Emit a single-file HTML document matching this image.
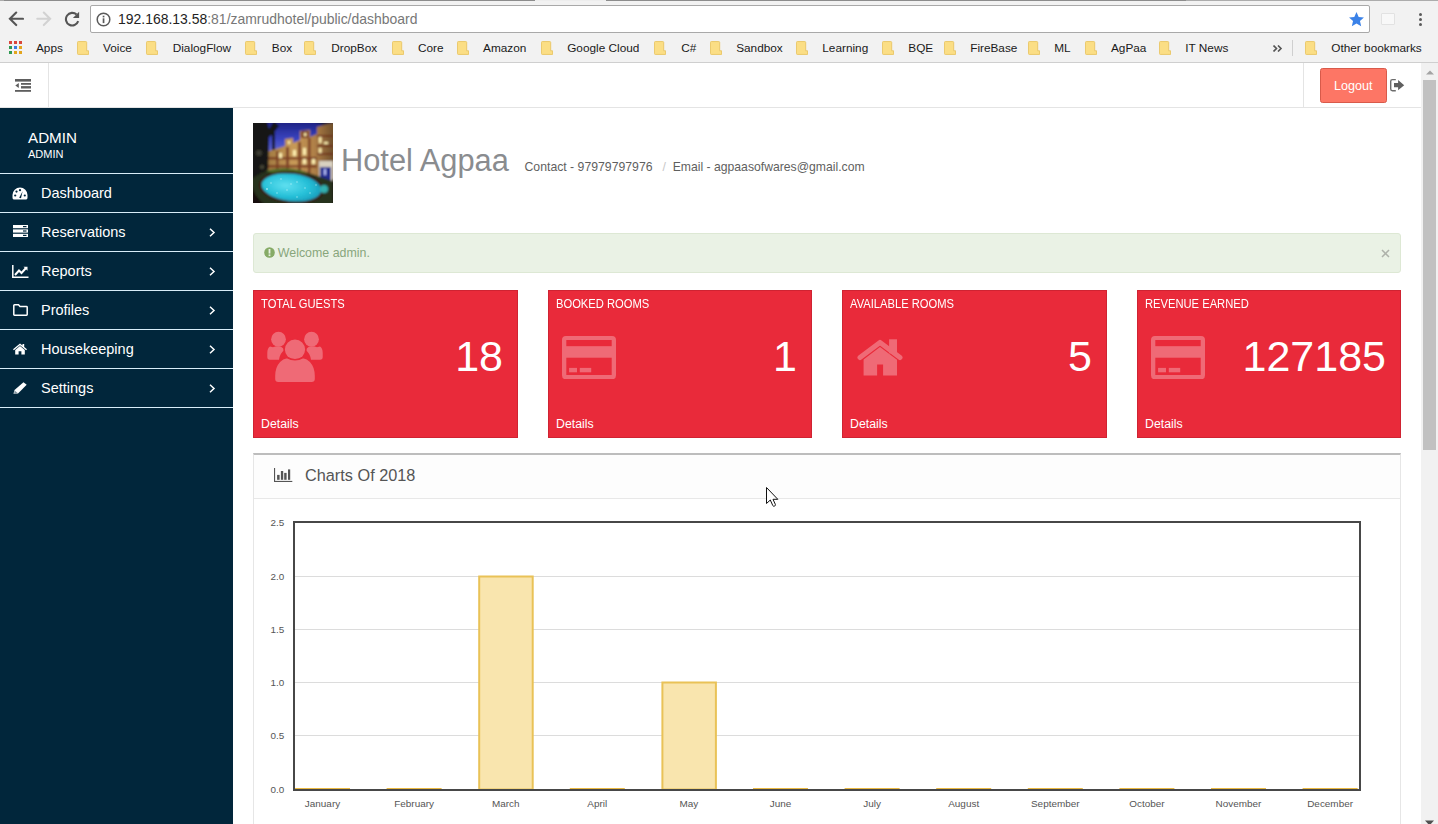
<!DOCTYPE html>
<html><head><meta charset="utf-8">
<style>
*{box-sizing:border-box;margin:0;padding:0}
html,body{width:1438px;height:824px;overflow:hidden;background:#fff;font-family:"Liberation Sans",sans-serif}
.abs{position:absolute}
.t{position:absolute;white-space:nowrap;line-height:1}
/* browser chrome */
#chrome{position:absolute;left:0;top:0;width:1438px;height:63px;background:#f2f2f2}
#topline{position:absolute;left:0;top:0;width:1438px;height:1px;background:#9a9a9a}
#addr{position:absolute;left:90px;top:5px;width:1280px;height:28px;background:#fff;border:1px solid #a9a9a9;border-radius:2px}
#bmline{position:absolute;left:0;top:62px;width:1438px;height:1px;background:#cfcfcf}
.bm{position:absolute;top:41px;font-size:11.8px;color:#1a1a1a;line-height:14px}
.fold{position:absolute;top:41px;width:12px;height:14px}
/* navbar */
#nav{position:absolute;left:0;top:63px;width:1421px;height:45px;background:#fff;border-bottom:1px solid #e4e4e4}
/* sidebar */
#side{position:absolute;left:0;top:108px;width:233px;height:716px;background:#01263b}
.sep{position:absolute;left:0;width:233px;height:1px;background:#d8edf9}
.mi{position:absolute;left:41px;font-size:14.5px;color:#fff;line-height:1}
.chev{position:absolute;left:209px;width:7px;height:9px}
.ico{position:absolute}
/* scrollbar */
#sb{position:absolute;left:1421px;top:63px;width:17px;height:761px;background:#f1f1f1}
#thumb{position:absolute;left:1423px;top:80px;width:13px;height:370px;background:#c1c1c1}
/* cards */
.card{position:absolute;top:290px;height:148px;background:#e92a3a;color:#fff;border:1px solid #cf2332}
.card .lbl{position:absolute;left:7px;top:7px;font-size:11.2px;line-height:1;white-space:nowrap;transform:scaleY(1.1);transform-origin:0 0}
.card .num{position:absolute;right:14px;top:338px;font-size:42px;line-height:1}
.card .det{position:absolute;left:7px;top:127px;font-size:12.3px;line-height:1}
</style></head><body>

<!-- ============ BROWSER CHROME ============ -->
<div id="chrome"></div>
<div class="abs" style="left:0;top:0;width:1438px;height:1px;background:#acacac"></div>
<div class="abs" style="left:4px;top:0;width:531px;height:1px;background:#8c8c8c"></div>
<div class="abs" style="left:535px;top:0;width:71px;height:1px;background:#ededed"></div>
<div class="abs" style="left:606px;top:0;width:580px;height:1px;background:#8c8c8c"></div>
<!-- nav icons -->
<svg class="abs" style="left:8px;top:11px" width="16" height="16" viewBox="0 0 16 16"><path d="M15 7.8H2.5M8.2 1.5L1.9 7.8 8.2 14.1" stroke="#555" stroke-width="2.1" fill="none" stroke-linecap="round"/></svg>
<svg class="abs" style="left:36px;top:11px" width="16" height="16" viewBox="0 0 16 16"><path d="M1.3 7.8H13.5M7.8 1.5L14.1 7.8 7.8 14.1" stroke="#d2d2d2" stroke-width="2.1" fill="none" stroke-linecap="round"/></svg>
<svg class="abs" style="left:64px;top:11px" width="16" height="16" viewBox="0 0 16 16"><path d="M14.2 10.2A6.3 6.3 0 1 1 12.6 3.6" stroke="#555" stroke-width="2.1" fill="none"/><path d="M15.1 0.8V7H8.9z" fill="#555"/></svg>
<div id="addr"></div>
<svg class="abs" style="left:96px;top:12px" width="15" height="15" viewBox="0 0 15 15"><circle cx="7.5" cy="7.5" r="6.3" stroke="#5a5a5a" stroke-width="1.5" fill="none"/><rect x="6.7" y="6.3" width="1.7" height="4.8" fill="#5a5a5a"/><rect x="6.7" y="3.7" width="1.7" height="1.7" fill="#5a5a5a"/></svg>
<div class="t" style="left:118px;top:12px;font-size:13.96px;line-height:14px;color:#222">192.168.13.58<span style="color:#777">:81/zamrudhotel/public/dashboard</span></div>
<svg class="abs" style="left:1347.5px;top:10.5px" width="17" height="17" viewBox="0 0 24 24"><path d="M12 1.5l3.1 7 7.4.6-5.6 4.9 1.7 7.4L12 17.5 5.4 21.4l1.7-7.4L1.5 9.1l7.4-.6z" fill="#3b82e8"/></svg>
<div class="abs" style="left:1381px;top:13px;width:14px;height:12px;border:1px solid #e2e2e2;background:#f8f8f8;border-radius:1px"></div>
<div class="abs" style="left:1419px;top:13px;width:3px;height:3px;border-radius:50%;background:#5a5a5a"></div>
<div class="abs" style="left:1419px;top:18px;width:3px;height:3px;border-radius:50%;background:#5a5a5a"></div>
<div class="abs" style="left:1419px;top:23px;width:3px;height:3px;border-radius:50%;background:#5a5a5a"></div>

<!-- bookmarks -->
<svg class="abs" style="left:9px;top:41px" width="14" height="14" viewBox="0 0 14 14">
<rect x="0" y="0" width="3" height="3" fill="#d9473a"/><rect x="5" y="0" width="3" height="3" fill="#d9473a"/><rect x="10" y="0" width="3" height="3" fill="#d9473a"/>
<rect x="0" y="5" width="3" height="3" fill="#2e9a52"/><rect x="5" y="5" width="3" height="3" fill="#3b7de0"/><rect x="10" y="5" width="3" height="3" fill="#e3a51e"/>
<rect x="0" y="10" width="3" height="3" fill="#2e9a52"/><rect x="5" y="10" width="3" height="3" fill="#e3a51e"/><rect x="10" y="10" width="3" height="3" fill="#e3a51e"/>
</svg>
<div class="bm" style="left:36px">Apps</div>
<svg class="fold" style="left:77px" width="13" height="15" viewBox="0 0 13 15"><path d="M0.5 1.5Q0.5 0.5 1.5 0.5H9.5Q10.5 0.5 10.5 1.5V10.5H12.5V14.5H1.5Q0.5 14.5 0.5 13.5z" fill="#fbde85" stroke="#e9c565" stroke-width="1"/></svg>
<div class="bm" style="left:103.0px">Voice</div>
<svg class="fold" style="left:146px" width="13" height="15" viewBox="0 0 13 15"><path d="M0.5 1.5Q0.5 0.5 1.5 0.5H9.5Q10.5 0.5 10.5 1.5V10.5H12.5V14.5H1.5Q0.5 14.5 0.5 13.5z" fill="#fbde85" stroke="#e9c565" stroke-width="1"/></svg>
<div class="bm" style="left:172.7px">DialogFlow</div>
<svg class="fold" style="left:245px" width="13" height="15" viewBox="0 0 13 15"><path d="M0.5 1.5Q0.5 0.5 1.5 0.5H9.5Q10.5 0.5 10.5 1.5V10.5H12.5V14.5H1.5Q0.5 14.5 0.5 13.5z" fill="#fbde85" stroke="#e9c565" stroke-width="1"/></svg>
<div class="bm" style="left:271.8px">Box</div>
<svg class="fold" style="left:304px" width="13" height="15" viewBox="0 0 13 15"><path d="M0.5 1.5Q0.5 0.5 1.5 0.5H9.5Q10.5 0.5 10.5 1.5V10.5H12.5V14.5H1.5Q0.5 14.5 0.5 13.5z" fill="#fbde85" stroke="#e9c565" stroke-width="1"/></svg>
<div class="bm" style="left:331.2px">DropBox</div>
<svg class="fold" style="left:392px" width="13" height="15" viewBox="0 0 13 15"><path d="M0.5 1.5Q0.5 0.5 1.5 0.5H9.5Q10.5 0.5 10.5 1.5V10.5H12.5V14.5H1.5Q0.5 14.5 0.5 13.5z" fill="#fbde85" stroke="#e9c565" stroke-width="1"/></svg>
<div class="bm" style="left:418.0px">Core</div>
<svg class="fold" style="left:457px" width="13" height="15" viewBox="0 0 13 15"><path d="M0.5 1.5Q0.5 0.5 1.5 0.5H9.5Q10.5 0.5 10.5 1.5V10.5H12.5V14.5H1.5Q0.5 14.5 0.5 13.5z" fill="#fbde85" stroke="#e9c565" stroke-width="1"/></svg>
<div class="bm" style="left:483.1px">Amazon</div>
<svg class="fold" style="left:541px" width="13" height="15" viewBox="0 0 13 15"><path d="M0.5 1.5Q0.5 0.5 1.5 0.5H9.5Q10.5 0.5 10.5 1.5V10.5H12.5V14.5H1.5Q0.5 14.5 0.5 13.5z" fill="#fbde85" stroke="#e9c565" stroke-width="1"/></svg>
<div class="bm" style="left:567.2px">Google Cloud</div>
<svg class="fold" style="left:654px" width="13" height="15" viewBox="0 0 13 15"><path d="M0.5 1.5Q0.5 0.5 1.5 0.5H9.5Q10.5 0.5 10.5 1.5V10.5H12.5V14.5H1.5Q0.5 14.5 0.5 13.5z" fill="#fbde85" stroke="#e9c565" stroke-width="1"/></svg>
<div class="bm" style="left:681.3px">C#</div>
<svg class="fold" style="left:710px" width="13" height="15" viewBox="0 0 13 15"><path d="M0.5 1.5Q0.5 0.5 1.5 0.5H9.5Q10.5 0.5 10.5 1.5V10.5H12.5V14.5H1.5Q0.5 14.5 0.5 13.5z" fill="#fbde85" stroke="#e9c565" stroke-width="1"/></svg>
<div class="bm" style="left:736.2px">Sandbox</div>
<svg class="fold" style="left:796px" width="13" height="15" viewBox="0 0 13 15"><path d="M0.5 1.5Q0.5 0.5 1.5 0.5H9.5Q10.5 0.5 10.5 1.5V10.5H12.5V14.5H1.5Q0.5 14.5 0.5 13.5z" fill="#fbde85" stroke="#e9c565" stroke-width="1"/></svg>
<div class="bm" style="left:822.3px">Learning</div>
<svg class="fold" style="left:882px" width="13" height="15" viewBox="0 0 13 15"><path d="M0.5 1.5Q0.5 0.5 1.5 0.5H9.5Q10.5 0.5 10.5 1.5V10.5H12.5V14.5H1.5Q0.5 14.5 0.5 13.5z" fill="#fbde85" stroke="#e9c565" stroke-width="1"/></svg>
<div class="bm" style="left:908.3px">BQE</div>
<svg class="fold" style="left:944px" width="13" height="15" viewBox="0 0 13 15"><path d="M0.5 1.5Q0.5 0.5 1.5 0.5H9.5Q10.5 0.5 10.5 1.5V10.5H12.5V14.5H1.5Q0.5 14.5 0.5 13.5z" fill="#fbde85" stroke="#e9c565" stroke-width="1"/></svg>
<div class="bm" style="left:970.2px">FireBase</div>
<svg class="fold" style="left:1028px" width="13" height="15" viewBox="0 0 13 15"><path d="M0.5 1.5Q0.5 0.5 1.5 0.5H9.5Q10.5 0.5 10.5 1.5V10.5H12.5V14.5H1.5Q0.5 14.5 0.5 13.5z" fill="#fbde85" stroke="#e9c565" stroke-width="1"/></svg>
<div class="bm" style="left:1054.3px">ML</div>
<svg class="fold" style="left:1085px" width="13" height="15" viewBox="0 0 13 15"><path d="M0.5 1.5Q0.5 0.5 1.5 0.5H9.5Q10.5 0.5 10.5 1.5V10.5H12.5V14.5H1.5Q0.5 14.5 0.5 13.5z" fill="#fbde85" stroke="#e9c565" stroke-width="1"/></svg>
<div class="bm" style="left:1111.0px">AgPaa</div>
<svg class="fold" style="left:1159px" width="13" height="15" viewBox="0 0 13 15"><path d="M0.5 1.5Q0.5 0.5 1.5 0.5H9.5Q10.5 0.5 10.5 1.5V10.5H12.5V14.5H1.5Q0.5 14.5 0.5 13.5z" fill="#fbde85" stroke="#e9c565" stroke-width="1"/></svg>
<div class="bm" style="left:1185.3px">IT News</div>
<svg class="abs" style="left:1273px;top:45px" width="10" height="7" viewBox="0 0 10 7"><path d="M0.5 0.5L3.5 3.5 0.5 6.5M5 0.5L8 3.5 5 6.5" stroke="#555" stroke-width="1.6" fill="none"/></svg>
<div class="abs" style="left:1292px;top:40px;width:1px;height:16px;background:#cfcfcf"></div>
<svg class="fold" style="left:1305px" width="13" height="15" viewBox="0 0 13 15"><path d="M0.5 1.5Q0.5 0.5 1.5 0.5H9.5Q10.5 0.5 10.5 1.5V10.5H12.5V14.5H1.5Q0.5 14.5 0.5 13.5z" fill="#fbde85" stroke="#e9c565" stroke-width="1"/></svg>
<div class="bm" style="left:1331.3px">Other bookmarks</div>
<div id="bmline"></div>

<!-- ============ NAVBAR ============ -->
<div id="nav"></div>
<div class="abs" style="left:48px;top:63px;width:1px;height:44px;background:#e4e4e4"></div>
<div class="abs" style="left:1303px;top:63px;width:1px;height:44px;background:#e4e4e4"></div>
<svg class="abs" style="left:15px;top:79px" width="16" height="13" viewBox="0 0 16 13" fill="#5e5e5e"><rect x="0" y="0" width="16" height="2.6"/><rect x="6" y="4" width="10" height="1.8"/><rect x="6" y="7.1" width="10" height="2.4"/><rect x="0" y="11" width="16" height="1.8"/><path d="M0.3 6.4L3.8 4V8.9z"/></svg>
<div class="abs" style="left:1320px;top:68px;width:67px;height:35px;background:#fd7665;border:1px solid #d85a4a;border-radius:2.5px"></div>
<div class="t" style="left:1334px;top:80px;font-size:12.6px;color:#fff">Logout</div>
<svg class="abs" style="left:1389px;top:78px" width="17" height="14" viewBox="0 0 17 14"><path d="M6.8 1.6H3.4Q1.7 1.6 1.7 3.3V11.1Q1.7 12.8 3.4 12.8H6.8" stroke="#6c6c6c" stroke-width="1.4" fill="none"/><path d="M5 5H9.1V2L15.2 7.2 9.1 12.3V9.3H5z" fill="#5f5f5f"/></svg>

<!-- ============ SIDEBAR ============ -->
<div id="side"></div>
<div class="t" style="left:28px;top:130px;font-size:15.2px;color:#fff">ADMIN</div>
<div class="t" style="left:28px;top:149px;font-size:11px;color:#fff">ADMIN</div>
<div class="sep" style="top:173px"></div>
<div class="sep" style="top:212px"></div>
<div class="sep" style="top:251px"></div>
<div class="sep" style="top:290px"></div>
<div class="sep" style="top:329px"></div>
<div class="sep" style="top:368px"></div>
<div class="sep" style="top:407px"></div>
<div class="mi" style="top:186px">Dashboard</div>
<div class="mi" style="top:225px">Reservations</div>
<svg class="chev" style="top:227.5px" viewBox="0 0 7 9"><path d="M1 0.8L5 4.5 1 8.2" stroke="#fff" stroke-width="1.5" fill="none"/></svg>
<div class="mi" style="top:264px">Reports</div>
<svg class="chev" style="top:266.5px" viewBox="0 0 7 9"><path d="M1 0.8L5 4.5 1 8.2" stroke="#fff" stroke-width="1.5" fill="none"/></svg>
<div class="mi" style="top:303px">Profiles</div>
<svg class="chev" style="top:305.5px" viewBox="0 0 7 9"><path d="M1 0.8L5 4.5 1 8.2" stroke="#fff" stroke-width="1.5" fill="none"/></svg>
<div class="mi" style="top:342px">Housekeeping</div>
<svg class="chev" style="top:344.5px" viewBox="0 0 7 9"><path d="M1 0.8L5 4.5 1 8.2" stroke="#fff" stroke-width="1.5" fill="none"/></svg>
<div class="mi" style="top:381px">Settings</div>
<svg class="chev" style="top:383.5px" viewBox="0 0 7 9"><path d="M1 0.8L5 4.5 1 8.2" stroke="#fff" stroke-width="1.5" fill="none"/></svg>
<svg class="ico" style="left:12px;top:187px" width="16" height="13" viewBox="0 0 16 13"><path d="M8 0.5A7.5 7.5 0 0 0 0.5 8v2.5q0 1.8 1.3 2H14.2q1.3-.2 1.3-2V8A7.5 7.5 0 0 0 8 0.5z" fill="#fff"/><circle cx="3.2" cy="8.5" r="1.1" fill="#01263b"/><circle cx="4.5" cy="4.6" r="1.1" fill="#01263b"/><circle cx="8" cy="3.2" r="1.1" fill="#01263b"/><circle cx="12.8" cy="8.5" r="1.1" fill="#01263b"/><path d="M7.2 10.8L10.6 4.2 9 11.2z" fill="#01263b"/></svg>
<svg class="ico" style="left:13px;top:225px" width="15" height="12" viewBox="0 0 15 12"><rect x="0" y="0" width="15" height="3.2" fill="#fff"/><rect x="0" y="4.4" width="15" height="3.2" fill="#fff"/><rect x="0" y="8.8" width="15" height="3.2" fill="#fff"/><rect x="10" y="1" width="3.5" height="1.2" fill="#01263b"/><rect x="10" y="5.4" width="3.5" height="1.2" fill="#01263b"/><rect x="10" y="9.8" width="3.5" height="1.2" fill="#01263b"/></svg>
<svg class="ico" style="left:12px;top:265px" width="17" height="13" viewBox="0 0 17 13"><path d="M0.8 0V12.2H16.5" stroke="#fff" stroke-width="1.5" fill="none"/><path d="M3 10L7 5.5 9.5 8 14 3" stroke="#fff" stroke-width="2" fill="none"/><path d="M11.5 1.8H15.5V5.8z" fill="#fff"/></svg>
<svg class="ico" style="left:13px;top:304px" width="15" height="12" viewBox="0 0 15 12"><path d="M0.8 1.5Q0.8 0.8 1.5 0.8H5.5L7 2.5H13.5Q14.2 2.5 14.2 3.2V10.5Q14.2 11.2 13.5 11.2H1.5Q0.8 11.2 0.8 10.5z" stroke="#fff" stroke-width="1.5" fill="none"/></svg>
<svg class="ico" style="left:13px;top:343px" width="14" height="12" viewBox="0 0 14 12"><path d="M7 0.5L0 6.3 0.9 7.3 7 2.3 13.1 7.3 14 6.3 11.2 4V1H9.5V2.6z" fill="#fff"/><path d="M2.2 7V11.5H5.6V8.3H8.4V11.5H11.8V7L7 3.1z" fill="#fff"/></svg>
<svg class="ico" style="left:13px;top:382px" width="14" height="12" viewBox="0 0 14 12"><path d="M10.5 0.3L13.7 2.8 5 11.5 0.5 11.8 1.5 8z" fill="#fff"/><path d="M1.6 8.6L4.6 11 1.3 11.4z" fill="#01263b" opacity=".5"/></svg>

<!-- ============ SCROLLBAR ============ -->
<div id="sb"></div>
<div id="thumb"></div>
<svg class="abs" style="left:1426px;top:70px" width="8" height="5" viewBox="0 0 8 5"><path d="M0 4.5L4 0.5 8 4.5z" fill="#a3a3a3"/></svg>
<svg class="abs" style="left:1425px;top:820px" width="9" height="6" viewBox="0 0 9 6"><path d="M0 0.5L4.5 5.5 9 0.5z" fill="#505050"/></svg>

<!-- ============ CONTENT ============ -->
<svg class="abs" style="left:253px;top:123px" width="80" height="80" viewBox="0 0 80 80">
<defs>
<linearGradient id="sky" x1="0" y1="0" x2="0" y2="1"><stop offset="0" stop-color="#1c2080"/><stop offset=".45" stop-color="#3a44c0"/><stop offset="1" stop-color="#7c80e0"/></linearGradient>
<radialGradient id="pool" cx=".4" cy=".45" r=".65"><stop offset="0" stop-color="#60e0f0"/><stop offset=".6" stop-color="#26c0d8"/><stop offset="1" stop-color="#1898b8"/></radialGradient>
<linearGradient id="bld" x1="0" y1="0" x2="1" y2="0"><stop offset="0" stop-color="#a07840"/><stop offset=".4" stop-color="#c89a58"/><stop offset=".7" stop-color="#b08048"/><stop offset="1" stop-color="#6a4a28"/></linearGradient>
<filter id="bl" x="-10%" y="-10%" width="120%" height="120%"><feGaussianBlur stdDeviation=".9"/></filter>
<clipPath id="cp"><rect width="80" height="80"/></clipPath>
</defs>
<g clip-path="url(#cp)">
<rect width="80" height="80" fill="#1a1410"/>
<g filter="url(#bl)">
<rect x="-2" y="-2" width="84" height="40" fill="url(#sky)"/>
<path d="M58 -2H82V6z" fill="#161a40"/>
<path d="M13 29L32 23V16L40 15V20L47 17V8L57 7V14L64 11V4L82 -1V56H13z" fill="url(#bld)"/>
<g fill="#6a2818" opacity=".75">
<rect x="14" y="34" width="50" height="2.5"/><rect x="14" y="42" width="50" height="2.5"/>
<rect x="23" y="28" width="2.5" height="22"/><rect x="33" y="24" width="3" height="26"/><rect x="45" y="19" width="3" height="31"/><rect x="55" y="15" width="2.5" height="35"/>
<rect x="64" y="12" width="16" height="2"/><rect x="64" y="22" width="16" height="2"/><rect x="64" y="30" width="16" height="2"/>
<rect x="48" y="8" width="8" height="7"/>
</g>
<g fill="#fff0b0"><rect x="50" y="25" width="3" height="7"/><rect x="50" y="36" width="3" height="5"/><rect x="40" y="27" width="3" height="6"/><rect x="26" y="30" width="3" height="5"/><rect x="59" y="36" width="3" height="5"/><rect x="66" y="14" width="2.5" height="6"/><rect x="66" y="25" width="2.5" height="5"/><rect x="35" y="18" width="2" height="3"/><rect x="51" y="10" width="2.5" height="3"/><rect x="71" y="19" width="4" height="2"/></g>
<rect x="66" y="38" width="14" height="20" fill="#d8d0c0"/>
<rect x="67" y="44" width="11" height="13" fill="#242a90"/>
<rect x="71" y="46" width="2" height="6" fill="#b8c0ff"/>
<path d="M-2 -2H14L16 6 21 -2 26 3 22 8 22 27 19 27 19 12 16 14 15 56H-2z" fill="#161812"/>
<circle cx="6" cy="30" r="3" fill="#3a3a30"/><circle cx="9" cy="44" r="2" fill="#4a4a38"/>
<path d="M8 50Q25 44 50 48L68 54 80 58V82H-2V56z" fill="#28301a"/>
<path d="M12 48Q28 43 48 47L56 52 38 54z" fill="#4a6a28"/>
<ellipse cx="38.5" cy="64.5" rx="32.5" ry="16" fill="#3a1c0e" transform="rotate(6 38.5 64.5)"/>
<ellipse cx="38.5" cy="64.5" rx="30" ry="13.8" fill="url(#pool)" transform="rotate(6 38.5 64.5)"/>
<ellipse cx="71" cy="66" rx="4" ry="4" fill="#30b0b0"/>
<path d="M-2 60Q2 75 12 82H-2z" fill="#120c08"/>
</g>
<g fill="#e0ffff" opacity=".65"><circle cx="18" cy="60" r=".7"/><circle cx="28" cy="56" r=".7"/><circle cx="44" cy="59" r=".7"/><circle cx="52" cy="65" r=".7"/><circle cx="34" cy="67" r=".7"/><circle cx="24" cy="70" r=".7"/><circle cx="44" cy="74" r=".7"/><circle cx="57" cy="70" r=".7"/><circle cx="14" cy="66" r=".9"/><circle cx="38" cy="61" r=".7"/><circle cx="63" cy="62" r=".7"/></g>
</g>
</svg>
<div class="t" style="left:341px;top:146px;font-size:30.8px;color:#8a8c8f">Hotel Agpaa</div>
<div class="t" style="left:524.5px;top:161px;font-size:12.25px;color:#5f5f5f">Contact - 97979797976</div>
<div class="t" style="left:662.5px;top:161px;font-size:12.25px;color:#c8c8c8">/</div>
<div class="t" style="left:672.7px;top:161px;font-size:12.2px;color:#5f5f5f">Email - agpaasofwares@gmail.com</div>
<div class="abs" style="left:253px;top:233px;width:1148px;height:40px;background:#eaf2e5;border:1px solid #dde8d4;border-radius:3px"></div>
<svg class="abs" style="left:263.5px;top:247px" width="11" height="11" viewBox="0 0 11 11"><circle cx="5.5" cy="5.5" r="5.3" fill="#86ab66"/><rect x="4.6" y="2" width="1.8" height="4.6" fill="#eaf2e5"/><rect x="4.6" y="7.4" width="1.8" height="1.7" fill="#eaf2e5"/></svg>
<div class="t" style="left:277.8px;top:247px;font-size:12.4px;color:#88a67c">Welcome admin.</div>
<svg class="abs" style="left:1381px;top:249px" width="9" height="9" viewBox="0 0 9 9"><path d="M1 1L8 8M8 1L1 8" stroke="#aeb2aa" stroke-width="1.5"/></svg>
<div class="card" style="left:253px;width:265px"><div class="lbl">TOTAL GUESTS</div><svg class="abs" style="left:13px;top:40px" width="56" height="53" viewBox="0 0 56 53" opacity=".3"><g fill="#fff"><circle cx="11.5" cy="8.2" r="7.4"/><circle cx="44.5" cy="8.2" r="7.4"/><path d="M3 15.5Q0.3 17 0.3 22V26Q0.3 28.7 3 28.7H12Q13 22 17.5 19Q15 15.2 11.5 15.2Q8 15.2 6 16.2z"/><path d="M53 15.5Q55.7 17 55.7 22V26Q55.7 28.7 53 28.7H44Q43 22 38.5 19Q41 15.2 44.5 15.2Q48 15.2 50 16.2z"/></g><circle cx="28" cy="18.6" r="11.8" fill="#e92a3a" opacity="0"/><g fill="#fff" stroke="#e92a3a" stroke-width="1.6"><circle cx="28" cy="18.6" r="10.9"/><path d="M12.5 30.5Q15.5 27 20 26.5Q28 31 36 26.5Q40.5 27 43.5 30.5Q48.6 36 48.6 45V48Q48.6 51.8 44.6 51.8H11.4Q7.4 51.8 7.4 48V45Q7.4 36 12.5 30.5z"/></g></svg><div class="num" style="top:44px;font-size:43px">18</div><div class="det">Details</div></div>
<div class="card" style="left:548px;width:264px"><div class="lbl">BOOKED ROOMS</div><svg class="abs" style="left:13px;top:44.7px" width="54" height="43.3" viewBox="0 0 54 43.3" opacity=".3" fill="#fff"><path fill-rule="evenodd" d="M4 0H50Q54 0 54 4V39.3Q54 43.3 50 43.3H4Q0 43.3 0 39.3V4Q0 0 4 0zM4.3 4V39H49.7V4z"/><rect x="4" y="10.2" width="46" height="11.5"/><rect x="7.1" y="31.9" width="7.9" height="4.4"/><rect x="17.8" y="31.9" width="11.4" height="4.4"/></svg><div class="num" style="top:44px;font-size:43px">1</div><div class="det">Details</div></div>
<div class="card" style="left:842px;width:265px"><div class="lbl">AVAILABLE ROOMS</div><svg class="abs" style="left:14px;top:47.5px" width="46" height="38" viewBox="0 0 46 38" opacity=".3" fill="#fff"><rect x="32.1" y="0.3" width="7.9" height="14"/><path d="M3 18.5L23 3.4 43 18.5" stroke="#fff" stroke-width="5" stroke-linecap="round" stroke-linejoin="round" fill="none"/><path fill-rule="evenodd" d="M6.6 20.4L23 8 40 20.8V36.6H6.6zM20.1 25.6V36.6H26.1V25.6z"/></svg><div class="num" style="top:44px;font-size:43px">5</div><div class="det">Details</div></div>
<div class="card" style="left:1137px;width:264px"><div class="lbl">REVENUE EARNED</div><svg class="abs" style="left:13px;top:44.7px" width="54" height="43.3" viewBox="0 0 54 43.3" opacity=".3" fill="#fff"><path fill-rule="evenodd" d="M4 0H50Q54 0 54 4V39.3Q54 43.3 50 43.3H4Q0 43.3 0 39.3V4Q0 0 4 0zM4.3 4V39H49.7V4z"/><rect x="4" y="10.2" width="46" height="11.5"/><rect x="7.1" y="31.9" width="7.9" height="4.4"/><rect x="17.8" y="31.9" width="11.4" height="4.4"/></svg><div class="num" style="top:44px;font-size:43px">127185</div><div class="det">Details</div></div>
<div class="abs" style="left:253px;top:453px;width:1148px;height:400px;border:1px solid #e6e6e6;border-top:2px solid #bdbdbd;background:#fff"></div>
<div class="abs" style="left:254px;top:455px;width:1146px;height:44px;background:#fdfdfd;border-bottom:1px solid #e8e8e8"></div>
<svg class="abs" style="left:274px;top:468px" width="19" height="14" viewBox="0 0 19 14" fill="#555"><rect x="0" y="0" width="1.1" height="14"/><rect x="0" y="12.9" width="18.3" height="1.1"/><rect x="3.1" y="6.9" width="2.5" height="4.9"/><rect x="6.9" y="3" width="2.3" height="8.8"/><rect x="10.2" y="4.9" width="2.4" height="6.9"/><rect x="14" y="1.4" width="2.2" height="10.4"/></svg>
<div class="t" style="left:305px;top:467px;font-size:16.3px;color:#555">Charts Of 2018</div>
<svg class="abs" style="left:0;top:0" width="1438" height="824" viewBox="0 0 1438 824">
<line x1="295" y1="576.5" x2="1359" y2="576.5" stroke="#dcdcdc" stroke-width="1"/>
<line x1="295" y1="629.5" x2="1359" y2="629.5" stroke="#dcdcdc" stroke-width="1"/>
<line x1="295" y1="682.5" x2="1359" y2="682.5" stroke="#dcdcdc" stroke-width="1"/>
<line x1="295" y1="735.5" x2="1359" y2="735.5" stroke="#dcdcdc" stroke-width="1"/>
<rect x="295.0" y="788" width="55" height="2" fill="#e9b841"/>
<rect x="386.6" y="788" width="55" height="2" fill="#e9b841"/>
<rect x="479.2" y="576.5" width="53.5" height="213" fill="#f9e5ae" stroke="#e9c257" stroke-width="2"/>
<rect x="569.8" y="788" width="55" height="2" fill="#e9b841"/>
<rect x="662.4" y="682.5" width="53.5" height="107" fill="#f9e5ae" stroke="#e9c257" stroke-width="2"/>
<rect x="753.0" y="788" width="55" height="2" fill="#e9b841"/>
<rect x="844.6" y="788" width="55" height="2" fill="#e9b841"/>
<rect x="936.2" y="788" width="55" height="2" fill="#e9b841"/>
<rect x="1027.8" y="788" width="55" height="2" fill="#e9b841"/>
<rect x="1119.4" y="788" width="55" height="2" fill="#e9b841"/>
<rect x="1211.0" y="788" width="55" height="2" fill="#e9b841"/>
<rect x="1302.6" y="788" width="55" height="2" fill="#e9b841"/>
<rect x="294" y="522" width="1066" height="268" fill="none" stroke="#474747" stroke-width="2"/>
</svg>
<div class="t" style="left:270.5px;top:518.3px;font-size:9.9px;color:#555">2.5</div>
<div class="t" style="left:270.5px;top:571.5px;font-size:9.9px;color:#555">2.0</div>
<div class="t" style="left:270.5px;top:624.7px;font-size:9.9px;color:#555">1.5</div>
<div class="t" style="left:270.5px;top:678px;font-size:9.9px;color:#555">1.0</div>
<div class="t" style="left:270.5px;top:731.2px;font-size:9.9px;color:#555">0.5</div>
<div class="t" style="left:270.5px;top:784.5px;font-size:9.9px;color:#555">0.0</div>
<div class="t" style="left:262.5px;width:120px;text-align:center;top:799px;font-size:9.95px;color:#555">January</div>
<div class="t" style="left:354.1px;width:120px;text-align:center;top:799px;font-size:9.95px;color:#555">February</div>
<div class="t" style="left:445.7px;width:120px;text-align:center;top:799px;font-size:9.95px;color:#555">March</div>
<div class="t" style="left:537.3px;width:120px;text-align:center;top:799px;font-size:9.95px;color:#555">April</div>
<div class="t" style="left:628.9px;width:120px;text-align:center;top:799px;font-size:9.95px;color:#555">May</div>
<div class="t" style="left:720.5px;width:120px;text-align:center;top:799px;font-size:9.95px;color:#555">June</div>
<div class="t" style="left:812.1px;width:120px;text-align:center;top:799px;font-size:9.95px;color:#555">July</div>
<div class="t" style="left:903.7px;width:120px;text-align:center;top:799px;font-size:9.95px;color:#555">August</div>
<div class="t" style="left:995.3px;width:120px;text-align:center;top:799px;font-size:9.95px;color:#555">September</div>
<div class="t" style="left:1086.9px;width:120px;text-align:center;top:799px;font-size:9.95px;color:#555">October</div>
<div class="t" style="left:1178.5px;width:120px;text-align:center;top:799px;font-size:9.95px;color:#555">November</div>
<div class="t" style="left:1270.1px;width:120px;text-align:center;top:799px;font-size:9.95px;color:#555">December</div>
<svg class="abs" style="left:766px;top:487px" width="13" height="20" viewBox="0 0 13 20"><path d="M0.5 0.5V16.5L4.3 13 6.8 18.6Q7.3 19.5 8.3 19.1L9 18.8Q9.8 18.3 9.4 17.5L7 12.3H11.8z" fill="#fff" stroke="#111" stroke-width="1"/></svg>

</body></html>
